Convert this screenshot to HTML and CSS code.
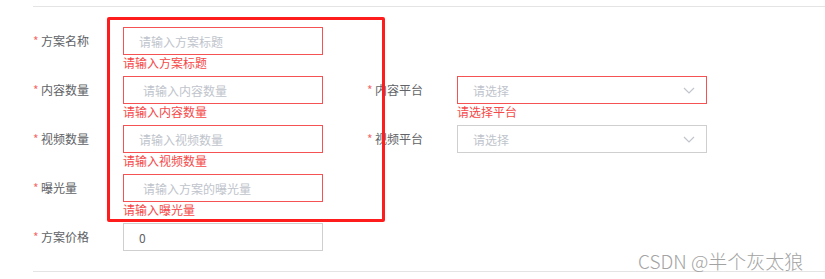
FILE: index.html
```html
<!DOCTYPE html>
<html lang="zh">
<head>
<meta charset="utf-8">
<link rel="stylesheet" href="styles.css">
</head>
<body>
<div class="page">
  <div class="divider"></div>
  <form class="form">
    <div class="row">
      <div class="item">
        <label class="label"><span class="req">*</span>方案名称</label>
        <div class="control">
          <input class="input is-error" placeholder="请输入方案标题">
          <div class="error">请输入方案标题</div>
        </div>
      </div>
    </div>
    <div class="row">
      <div class="item">
        <label class="label"><span class="req">*</span>内容数量</label>
        <div class="control">
          <input class="input is-error indent" placeholder="请输入内容数量">
          <div class="error">请输入内容数量</div>
        </div>
      </div>
      <div class="item item-right">
        <label class="label"><span class="req">*</span>内容平台</label>
        <div class="control">
          <div class="select is-error">
            <span class="ph">请选择</span>
            <svg class="arrow" width="12" height="7" viewBox="0 0 12 7"><polyline points="1,1 6,6 11,1" fill="none" stroke="#c0c4cc" stroke-width="1.2"/></svg>
          </div>
          <div class="error">请选择平台</div>
        </div>
      </div>
    </div>
    <div class="row">
      <div class="item">
        <label class="label"><span class="req">*</span>视频数量</label>
        <div class="control">
          <input class="input is-error" placeholder="请输入视频数量">
          <div class="error">请输入视频数量</div>
        </div>
      </div>
      <div class="item item-right">
        <label class="label"><span class="req">*</span>视频平台</label>
        <div class="control">
          <div class="select">
            <span class="ph">请选择</span>
            <svg class="arrow" width="12" height="7" viewBox="0 0 12 7"><polyline points="1,1 6,6 11,1" fill="none" stroke="#c0c4cc" stroke-width="1.2"/></svg>
          </div>
        </div>
      </div>
    </div>
    <div class="row">
      <div class="item">
        <label class="label"><span class="req">*</span>曝光量</label>
        <div class="control">
          <input class="input is-error indent" placeholder="请输入方案的曝光量">
          <div class="error">请输入曝光量</div>
        </div>
      </div>
    </div>
    <div class="row">
      <div class="item">
        <label class="label"><span class="req">*</span>方案价格</label>
        <div class="control">
          <input class="input" value="0">
        </div>
      </div>
    </div>
  </form>
  <div class="divider"></div>
  <div class="annot"></div>
  <div class="watermark">CSDN @半个灰太狼</div>
</div>
</body>
</html>
```
FILE: styles.css
```css
html, body {
  margin: 0;
  padding: 0;
  background: #ffffff;
}
body {
  font-family: "Noto Sans CJK SC", "Noto Sans", sans-serif;
  font-size: 12px;
  color: #606266;
}
.page {
  position: relative;
  width: 825px;
  height: 279px;
  padding: 6px 0 0 33px;
  box-sizing: border-box;
  overflow: hidden;
}
.divider {
  height: 1px;
  background: #e4e4e4;
}
.form {
  display: flex;
  flex-direction: column;
  gap: 21px;
  padding: 20px 0;
}
.row {
  display: flex;
  height: 28px;
}
.item {
  display: flex;
  width: 334px;
}
.item-right {
  width: 340px;
}
.label {
  width: 90px;
  height: 28px;
  line-height: 28px;
  flex-shrink: 0;
  white-space: nowrap;
}
.req {
  display: inline-block;
  width: 8px;
  color: #f56c6c;
}
.control {
  position: relative;
}
.input {
  display: block;
  box-sizing: border-box;
  width: 200px;
  height: 28px;
  margin: 0;
  padding: 0 15px;
  border: 1px solid #cfcfcf;
  border-radius: 0;
  font-family: inherit;
  font-size: 12px;
  color: #606266;
  outline: none;
  background: #fff;
}
.input.indent {
  padding-left: 19px;
}
.input::placeholder {
  color: #c0c4cc;
}
.is-error {
  border-color: #f55353 !important;
}
.select {
  box-sizing: border-box;
  width: 250px;
  height: 28px;
  border: 1px solid #cfcfcf;
  display: flex;
  align-items: center;
  justify-content: space-between;
  padding: 0 11px 0 15px;
}
.ph {
  color: #c0c4cc;
}
.arrow {
  display: block;
}
.error {
  position: absolute;
  left: 0;
  top: 100%;
  padding-top: 1px;
  line-height: 14px;
  color: #f54848;
  white-space: nowrap;
}
.annot {
  position: absolute;
  left: 107px;
  top: 17px;
  width: 278px;
  height: 205px;
  box-sizing: border-box;
  border: 3px solid #ff1c1c;
  border-radius: 2px;
}
.watermark {
  position: absolute;
  left: 638px;
  top: 249px;
  font-family: "Noto Sans CJK SC", "Noto Sans", sans-serif;
  font-size: 19px;
  line-height: 24px;
  font-weight: 300;
  color: #a3a3a3;
  white-space: nowrap;
}
```
